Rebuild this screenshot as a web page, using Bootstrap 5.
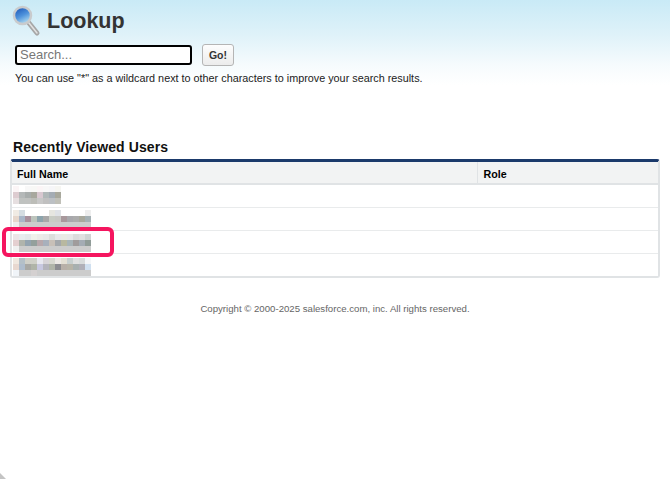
<!DOCTYPE html>
<html lang="en"><head><meta charset="utf-8"><title>Lookup</title>
<link href="https://cdn.jsdelivr.net/npm/bootstrap@5.3.0/dist/css/bootstrap.min.css" rel="stylesheet">
<style>
html,body{height:100%;background:#fff}
body{font-family:"Liberation Sans",Arial,sans-serif;color:#000;overflow:hidden}
.lk-page{position:relative;height:479px;background:linear-gradient(#c9eaf6 0,#dff2f9 35px,#f6fbfd 65px,#fff 85px);overflow:hidden}
.lk-head{padding:5px 0 0 12px;gap:5px;height:38px}
.lk-head h1{font:700 21.5px/1 "Liberation Sans",sans-serif;color:#333;margin:0;padding-top:6px}
.lk-form{padding:3px 0 0 15px;gap:10px;height:30px}
.lk-input{width:177px;height:20px;border:2px solid #000;border-radius:3px;background:#fff;font:13px/1 "Liberation Sans",sans-serif;padding:0 2px 0 3px;outline:0;color:#333}
.lk-input::placeholder{color:#777;opacity:1}
.lk-go{width:32px;height:22px;padding:0;font:700 10.5px "Liberation Sans",sans-serif;color:#333;background:linear-gradient(#fdfdfd,#ececec);border:1px solid #b5b5b5;border-radius:3px}
.lk-hint{font-size:10.82px;line-height:13px;margin:4px 0 0 15px;color:#222}
.lk-title{font:700 14px/17px "Liberation Sans",sans-serif;color:#111;margin:54px 0 3px 13px;letter-spacing:.1px}
.lk-box{margin:0 10px;border:2px solid #e0e3e5;border-top:3px solid #1b3a6b;border-radius:3px;background:#fff}
.lk-grid{margin:0;font-size:10.7px;table-layout:fixed;width:100%}
.lk-grid th{background:#f2f3f3;font-weight:700;color:#000;height:22px;padding:3px 5px 0;border-bottom:2px solid #e0e3e5;vertical-align:middle}
.lk-grid th:first-child{width:465px;border-right:1px solid #e0e3e5}
.lk-grid th:last-child{padding-left:6px}
.lk-grid td{height:23px;padding:0;border-bottom:1px solid #e9ebec;vertical-align:top}
.lk-grid tr:last-child td{border-bottom:0}
.lk-grid tr:nth-child(1) td{padding-top:1px}
.lk-grid tr:nth-child(2) td{padding-top:2px}
.lk-grid tr:nth-child(3) td{padding-top:3px}
.lk-grid tr:nth-child(4) td{padding-top:4px}
.lk-blur{display:block;margin-left:1px}
.lk-foot{font-size:9.65px;color:#666;text-align:center;margin-top:25px;line-height:12px}
.lk-mark{position:absolute;left:2px;top:227px;width:112px;height:30px;border:4px solid #f5155f;border-radius:6px}
.lk-corner{position:absolute;left:0;bottom:0;width:6px;height:6px;background:#c4c4c4;clip-path:polygon(0 0,0 100%,100% 100%)}
</style></head><body>
<div class="lk-page">
<div class="d-flex align-items-start lk-head">
<svg width="30" height="33" viewBox="0 0 30 33" aria-hidden="true"><defs><linearGradient id="g" x1=".25" y1="0" x2=".75" y2="1"><stop offset="0" stop-color="#1c57b8"/><stop offset=".5" stop-color="#4f93dc"/><stop offset="1" stop-color="#bfe6f2"/></linearGradient></defs><path d="M17 18l8 10" stroke="#a6a6a6" stroke-width="5" stroke-linecap="round"/><path d="M17 18l8 10" stroke="#e2e2e2" stroke-width="1.5" stroke-linecap="round"/><circle cx="10.5" cy="10.5" r="8.5" fill="url(#g)" stroke="#c9cbcd" stroke-width="2.5"/></svg>
<h1>Lookup</h1></div>
<form class="d-flex align-items-center lk-form"><input class="lk-input" placeholder="Search..."><button type="button" class="btn lk-go">Go!</button></form>
<p class="lk-hint">You can use "*" as a wildcard next to other characters to improve your search results.</p>
<h2 class="lk-title">Recently Viewed Users</h2>
<div class="lk-box">
<table class="table lk-grid"><thead><tr><th>Full Name</th><th>Role</th></tr></thead><tbody>
<tr><td><svg class="lk-blur" width="78" height="18" data-r="0"></svg></td><td></td></tr>
<tr><td><svg class="lk-blur" width="78" height="18" data-r="1"></svg></td><td></td></tr>
<tr><td><svg class="lk-blur" width="78" height="18" data-r="2"></svg></td><td></td></tr>
<tr><td><svg class="lk-blur" width="78" height="18" data-r="3"></svg></td><td></td></tr>
</tbody></table></div>
<p class="lk-foot">Copyright © 2000-2025 salesforce.com, inc. All rights reserved.</p>
<div class="lk-mark"></div><div class="lk-corner"></div>
</div>
<script>
var M=[
[["fbf5f6","fff","f8f8f8","f8f8f6","fbf5f6","f8f8f8","f6f6f8","f6f6f2"],
 ["ddccd0","b4b8b8","a8adac","a8a89e","d8c8d0","b0b8b8","a4acb4","a8a89c"],
 ["e6dfe0","bfc2c0","c0c2c0","bcbdb8","c8c8c8","c0c0c0","bcc0c4","c0c0b8"]],
[["f0ebe4","d5dde2","fff","fff","fff","fff","e6e6e0","dfe2e6","fff","fff","fff","fff","eee"],
 ["e6d7cc","a8b6c8","a8909c","bcc4bc","8ca4ac","a8a8a8","c8ccc4","c8c8c4","a8989c","a8a8ac","acacac","a8a89c","a4b0b4"],
 ["eeeeee","cccccc","cccccc","cccccc","cccccc","cccccc","cccccc","cccccc","cccccc","cccccc","cccccc","cccccc","cccccc"]],
[["ece6e8","e8ecee","e4e8ea","f0f0ea","ecebe8","e8e8e8","dcdedc","e8e8ea","eaeae4","e8e8e8","dcdcdc","e0e0e0","d0d4d4"],
 ["e4cfd0","b0b4ac","94a4b0","94a09c","b8a8ac","a8b0bc","c8c0b8","a4a8ac","b8b8a0","a8b4b8","a09c9c","a4acb4","909c98"],
 ["f0f0f0","cccccc","cccccc","cccccc","cccccc","cccccc","cccccc","cccccc","cccccc","cccccc","cccccc","cccccc","cccccc"]],
[["f0e8e0","b4c0c8","d0d0c8","d0d0c8","e8e8f0","d8d4d8","d8d8d0","ece8e4","e4e0d4","c8d0d0","e0e0e0","d8dcdc","f4f6f8"],
 ["e8d8d0","aebccc","a8a8a4","b0b4a8","c8c8e0","b4b4bc","b0b4a8","8c8c90","b8b0a8","b8b4a8","a8b0b0","b0b0b8","d0e0f0"],
 ["f0f4f8","cccccc","cccccc","d4d0d0","cccccc","cccccc","cccccc","cccccc","cccccc","cccccc","cccccc","cccccc","cccccc"]]
];
document.querySelectorAll('.lk-blur').forEach(function(s){
 var d=M[+s.dataset.r],h='';
 d.forEach(function(row,y){row.forEach(function(c,x){
  h+='<rect x="'+x*6+'" y="'+y*6+'" width="6" height="6" fill="#'+c+'"/>';});});
 s.innerHTML=h;});
</script>
</body></html>
